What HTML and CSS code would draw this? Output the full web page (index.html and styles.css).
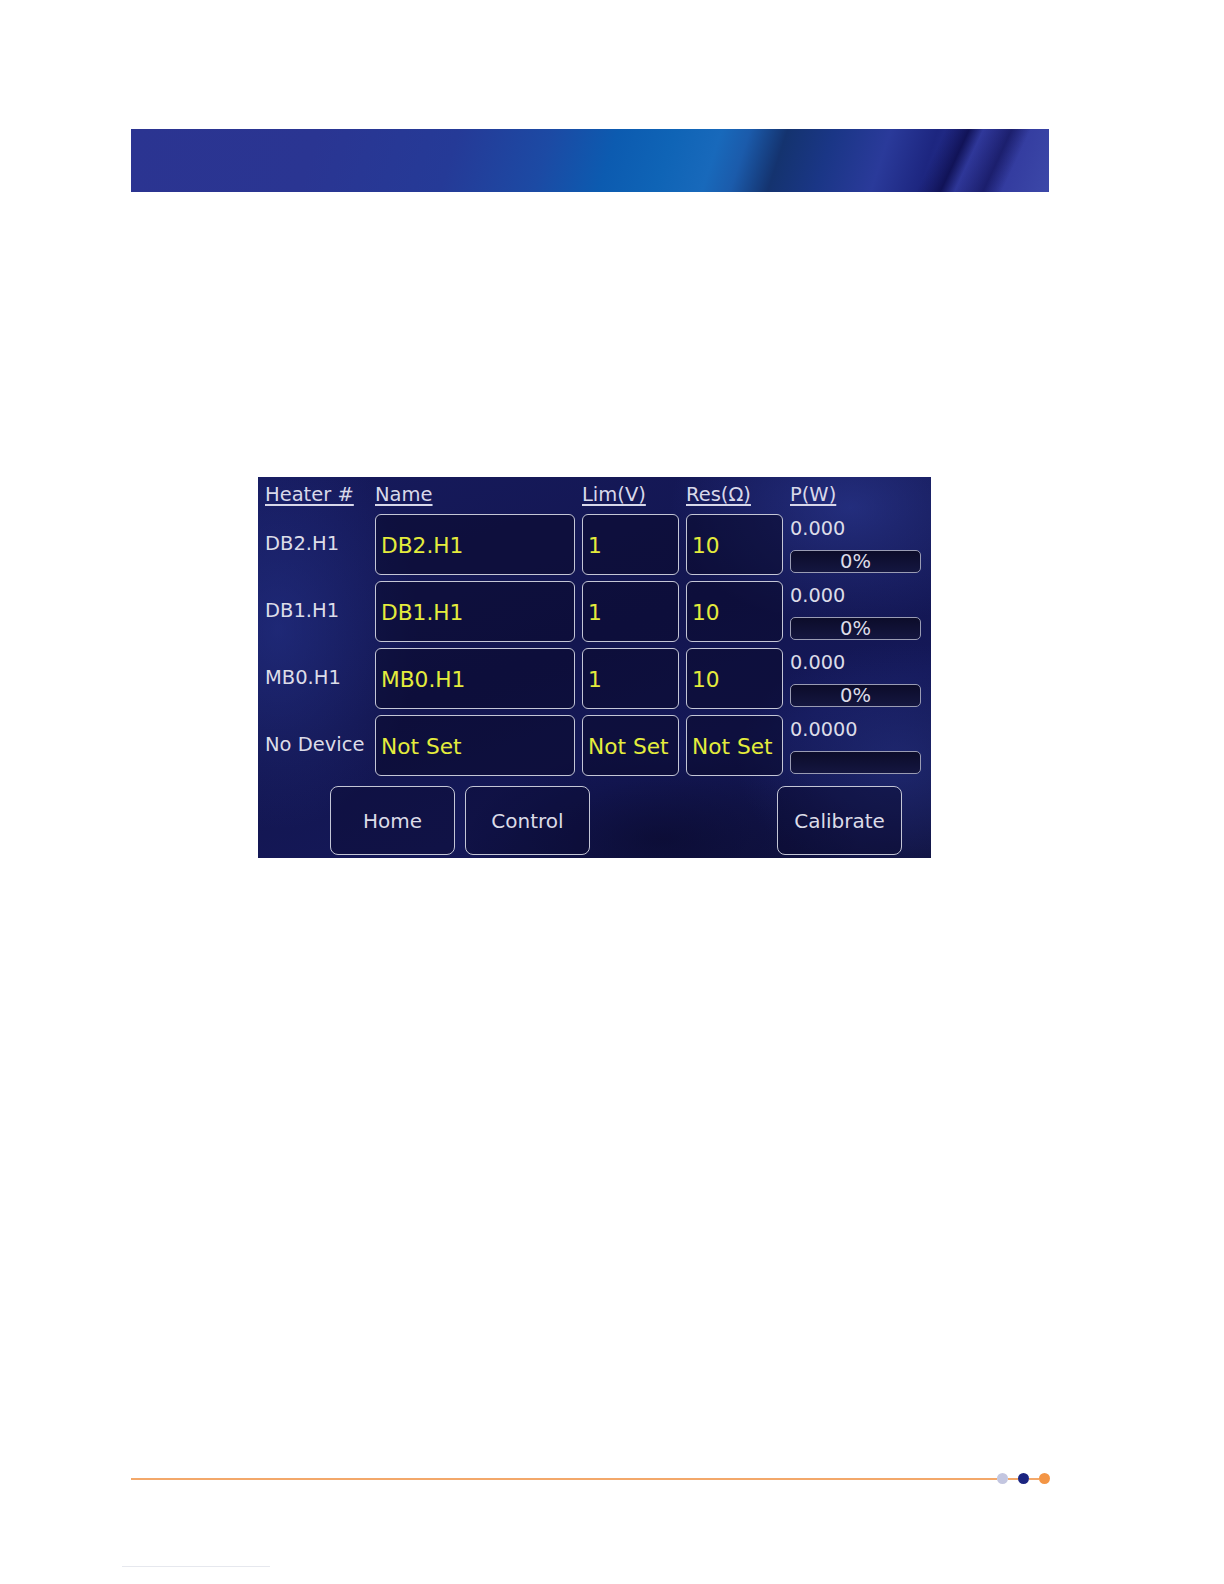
FILE: index.html
```html
<!DOCTYPE html>
<html>
<head>
<meta charset="utf-8">
<link rel="stylesheet" href="styles.css">
</head>
<body>
<div class="page">
  <div class="banner"></div>

  <div class="panel">
    <div class="table">
      <div class="hdr">Heater #</div>
      <div class="hdr">Name</div>
      <div class="hdr">Lim(V)</div>
      <div class="hdr">Res(Ω)</div>
      <div class="hdr">P(W)</div>

      <div class="label">DB2.H1</div>
      <div class="field">DB2.H1</div>
      <div class="field">1</div>
      <div class="field">10</div>
      <div class="power"><span class="pval">0.000</span><div class="bar">0%</div></div>

      <div class="label">DB1.H1</div>
      <div class="field">DB1.H1</div>
      <div class="field">1</div>
      <div class="field">10</div>
      <div class="power"><span class="pval">0.000</span><div class="bar">0%</div></div>

      <div class="label">MB0.H1</div>
      <div class="field">MB0.H1</div>
      <div class="field">1</div>
      <div class="field">10</div>
      <div class="power"><span class="pval">0.000</span><div class="bar">0%</div></div>

      <div class="label">No Device</div>
      <div class="field">Not Set</div>
      <div class="field">Not Set</div>
      <div class="field">Not Set</div>
      <div class="power"><span class="pval">0.0000</span><div class="bar"></div></div>
    </div>
    <div class="buttons">
      <div class="btn">Home</div>
      <div class="btn">Control</div>
      <div class="btn btn-right">Calibrate</div>
    </div>
  </div>

  <div class="footer">
    <div class="fline"></div>
    <span class="dot dot-light"></span>
    <span class="dseg"></span>
    <span class="dot dot-navy"></span>
    <span class="dseg"></span>
    <span class="dot dot-orange"></span>
  </div>

  <div class="bottom-line"></div>
</div>
</body>
</html>
```

FILE: styles.css
```css
html, body {
  margin: 0;
  padding: 0;
  background: #ffffff;
  overflow: hidden;
}

.page {
  height: 1455px;
  padding-top: 129px;
  font-family: "DejaVu Sans", "Liberation Sans", sans-serif;
}

.banner {
  margin-left: 131px;
  width: 918px;
  height: 63px;
  background:
    linear-gradient(115deg,
      rgba(255,255,255,0) 0%,
      rgba(255,255,255,0) 86%,
      rgba(10,10,70,0.75) 88.5%,
      rgba(60,70,170,0.3) 90%,
      rgba(10,10,70,0.55) 93%,
      rgba(255,255,255,0) 95%),
    linear-gradient(108deg,
      #2b3491 0%,
      #2a3592 20%,
      #253a97 35%,
      #1c4aa4 45%,
      #0c5bb0 52%,
      #0f64b6 58%,
      #1869bb 63%,
      #1b5bab 66%,
      #14336f 70%,
      #1a3686 75%,
      #2a3a9a 81%,
      #1d2680 86%,
      #30379c 93%,
      #3c48a8 100%);
}

.panel {
  margin-top: 285px;
  margin-left: 258px;
  width: 673px;
  height: 381px;
  box-sizing: border-box;
  padding: 0 10px 0 7px;
  display: flex;
  flex-direction: column;
  background:
    radial-gradient(ellipse 180px 120px at 88% 8%, rgba(48,64,160,0.55), rgba(48,64,160,0) 100%),
    radial-gradient(ellipse 140px 200px at 3% 40%, rgba(40,56,150,0.5), rgba(40,56,150,0) 100%),
    radial-gradient(ellipse 200px 90px at 60% 95%, rgba(8,8,40,0.6), rgba(8,8,40,0) 100%),
    radial-gradient(ellipse 160px 120px at 95% 75%, rgba(44,60,150,0.45), rgba(44,60,150,0) 100%),
    linear-gradient(160deg, #161a5c 0%, #131650 45%, #141858 70%, #10123e 100%);
  color: #dcdce8;
}

.table {
  display: grid;
  grid-template-columns: 103px 200px 97px 97px 131px;
  grid-template-rows: 31px repeat(4, 61px);
  column-gap: 7px;
  row-gap: 6px;
}

.hdr {
  padding-top: 7px;
  font-size: 19.5px;
  line-height: 22px;
  color: #d8d8ea;
  text-decoration: underline;
  text-decoration-thickness: 1.5px;
  text-underline-offset: 3px;
  white-space: nowrap;
}

.label {
  display: flex;
  align-items: center;
  padding-bottom: 3px;
  font-size: 19.5px;
  color: #dcdce8;
  white-space: nowrap;
}

.field {
  display: flex;
  align-items: center;
  box-sizing: border-box;
  padding: 2px 0 0 5px;
  border: 1.5px solid #c4c6d6;
  border-radius: 6px;
  background: rgba(10, 10, 42, 0.55);
  color: #e4ec3c;
  font-size: 21.7px;
  white-space: nowrap;
  overflow: hidden;
}

.power {
  display: flex;
  flex-direction: column;
  justify-content: space-between;
  padding: 4px 0 2px 0;
}

.pval {
  font-size: 19.3px;
  line-height: 22px;
  color: #dcdce8;
}

.bar {
  height: 23px;
  box-sizing: border-box;
  border: 1.5px solid #9a9cb4;
  border-radius: 5px;
  background: linear-gradient(180deg, #0c0c2a, #141640);
  text-align: center;
  font-size: 19.5px;
  line-height: 21px;
  color: #dcdce8;
}

.buttons {
  display: flex;
  gap: 10px;
  margin-top: 10px;
  padding-left: 65px;
}

.btn {
  width: 125px;
  height: 69px;
  box-sizing: border-box;
  border: 1.5px solid #c4c6d6;
  border-radius: 8px;
  background: rgba(12, 12, 48, 0.45);
  display: flex;
  align-items: center;
  justify-content: center;
  font-size: 20px;
  color: #dcdce8;
}

.btn-right {
  margin-left: auto;
  margin-right: 19px;
}

.footer {
  margin-top: 615px;
  margin-left: 131px;
  width: 919px;
  height: 11px;
  display: flex;
  align-items: center;
}

.fline {
  flex: 1;
  height: 2px;
  background: #f3a86a;
}

.dseg {
  width: 10px;
  height: 2px;
  background: #f3a86a;
}

.dot {
  width: 11px;
  height: 11px;
  border-radius: 50%;
  flex: none;
}

.dot-light { background: #c3c6e0; }
.dot-navy { background: #1b2480; }
.dot-orange { background: #f39545; }

.bottom-line {
  margin-top: 82px;
  margin-left: 122px;
  width: 148px;
  height: 1px;
  background: #e6e8ee;
}
```
